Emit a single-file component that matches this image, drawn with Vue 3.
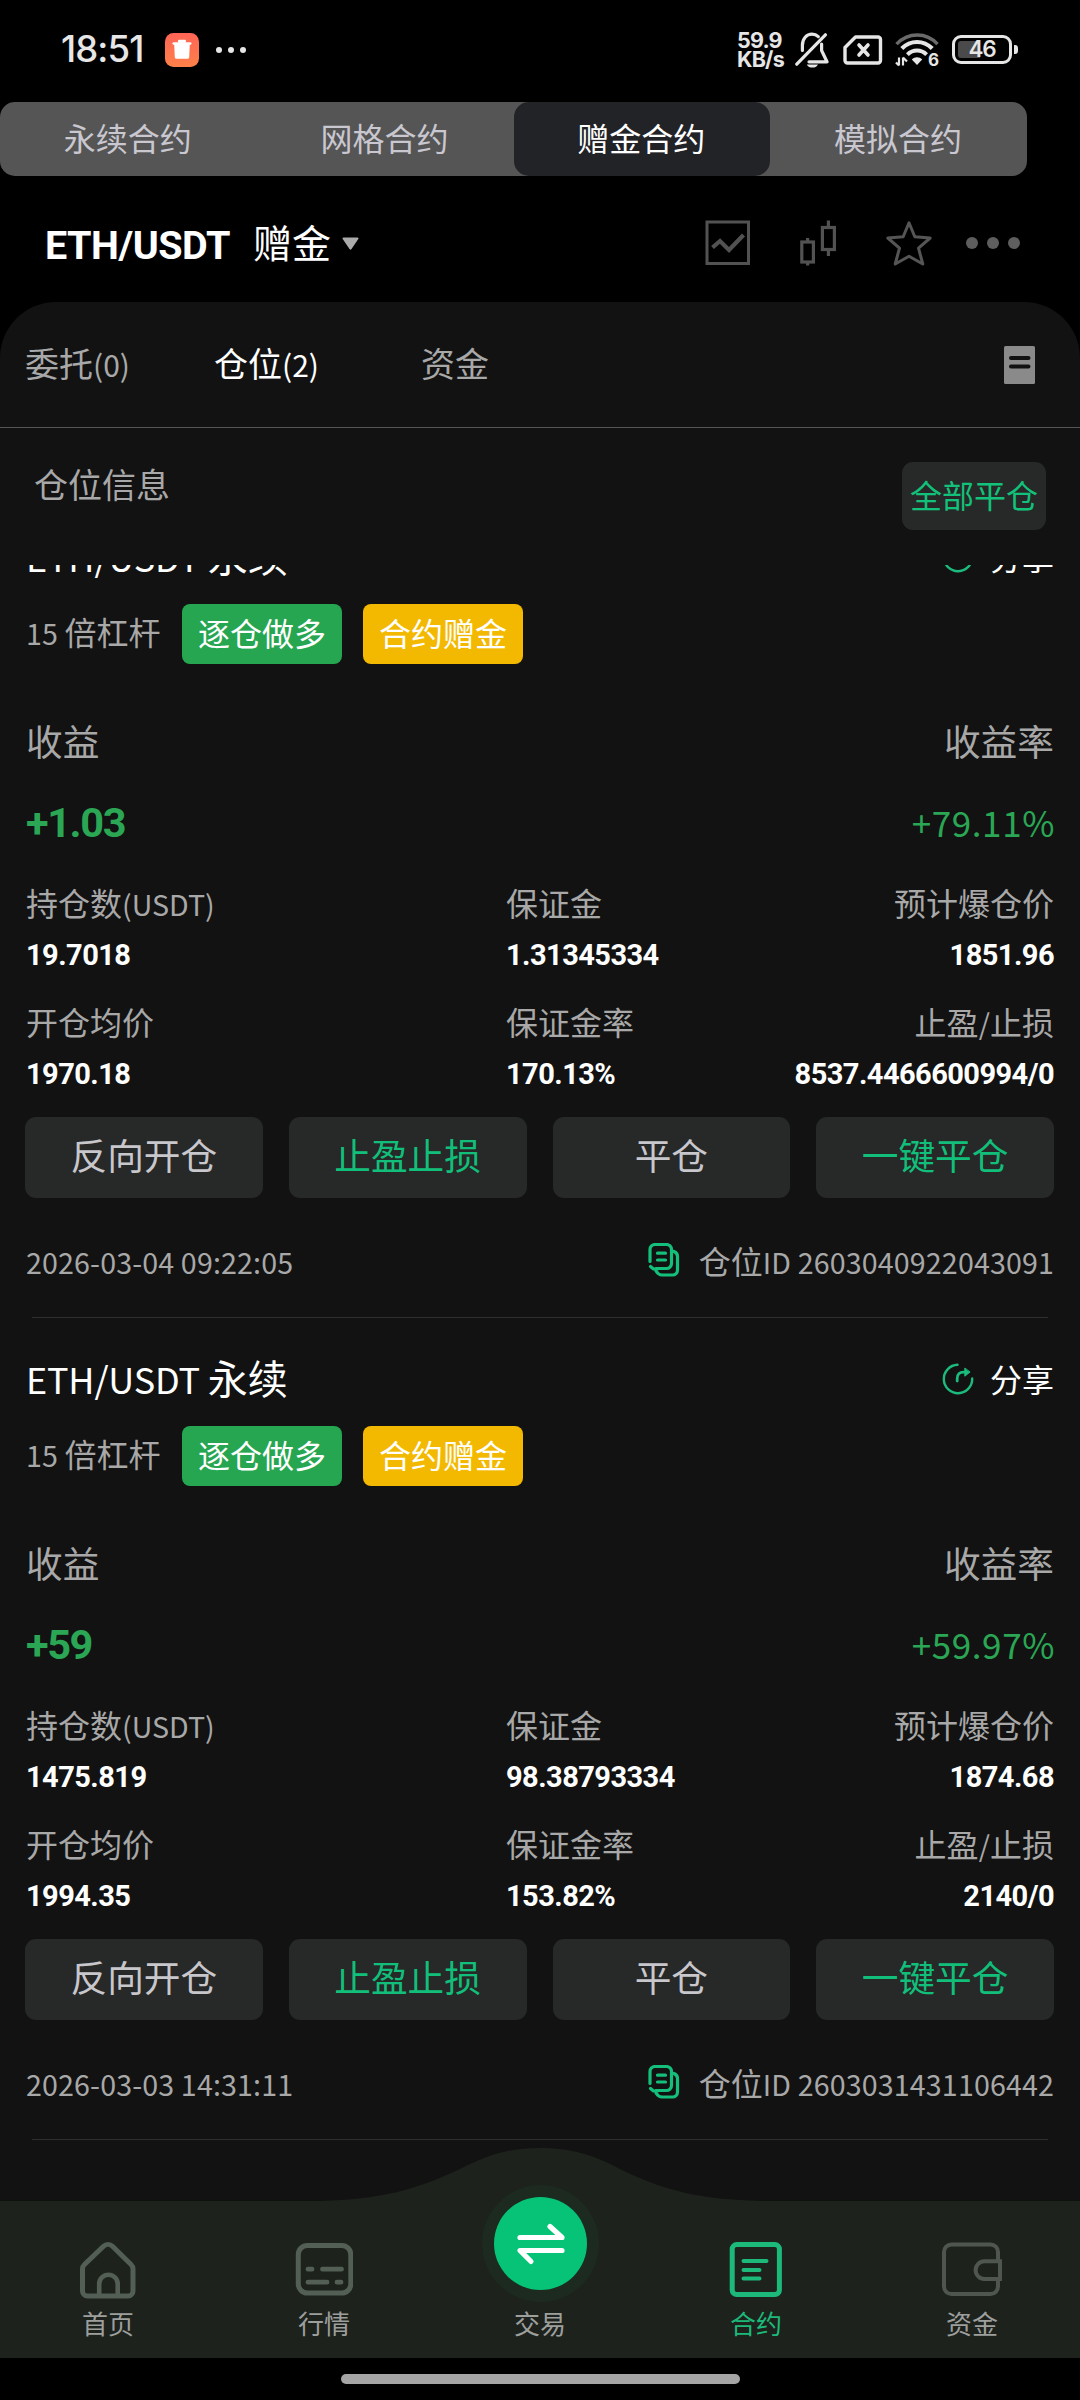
<script setup>
const modes = [
  { label: '永续合约' },
  { label: '网格合约' },
  { label: '赠金合约', active: true },
  { label: '模拟合约' },
]

const positions = [
  {
    profit: '+1.03',
    rate: '+79.11%',
    size: '19.7018',
    margin: '1.31345334',
    liquidation: '1851.96',
    entry: '1970.18',
    marginRate: '170.13%',
    stops: '8537.4466600994/0',
    time: '2026-03-04 09:22:05',
    id: '2603040922043091',
  },
  {
    profit: '+59',
    rate: '+59.97%',
    size: '1475.819',
    margin: '98.38793334',
    liquidation: '1874.68',
    entry: '1994.35',
    marginRate: '153.82%',
    stops: '2140/0',
    time: '2026-03-03 14:31:11',
    id: '2603031431106442',
  },
]

const actions = [
  { label: '反向开仓' },
  { label: '止盈止损', accent: true },
  { label: '平仓' },
  { label: '一键平仓', accent: true },
]
</script>

<template>
  <div class="screen">
    <header class="status">
      <span class="clock">18:51</span>
      <svg class="app-badge" width="34" height="34" viewBox="0 0 34 34">
        <defs>
          <linearGradient id="badge" x1="0" y1="0" x2="0" y2="1">
            <stop offset="0" stop-color="#ff6456" />
            <stop offset="1" stop-color="#ff8149" />
          </linearGradient>
        </defs>
        <rect width="34" height="34" rx="8.5" fill="url(#badge)" />
        <rect x="13" y="6.800" width="8" height="3" rx="1.200" fill="#fff" />
        <rect x="7.500" y="9.200" width="19" height="2.600" rx="1.200" fill="#fff" />
        <path d="M9.200 11h15.600l-.6 13.200a1.800 1.800 0 0 1-1.800 1.600H11.600a1.800 1.800 0 0 1-1.800-1.600z" fill="#fff" />
      </svg>
      <span class="mini-dots"><i></i><i></i><i></i></span>
      <div class="status-right">
        <span class="speed"><span>59.9</span><span>KB/s</span></span>
        <svg class="bell" width="34" height="36" viewBox="0 0 34 36" fill="none" stroke="#e6e6e6" stroke-width="3.200" stroke-linecap="round" stroke-linejoin="round">
          <path d="M7.400 18.500V13.200C7.400 6.600 11.600 2.200 17 2.200c2.600 0 4.600 .8 6.300 2.400" />
          <path d="M26.600 12v6.500l5.400 11.300H14" />
          <path d="M1.800 32.200L30.400 2.800" />
          <path d="M11.800 32.400h11.200c-1.200 2.400-3.200 3.200-5.600 3.200s-4.400-.8-5.600-3.200z" fill="#e6e6e6" stroke="none" />
        </svg>
        <svg class="sim" width="40" height="30" viewBox="0 0 40 30" fill="none" stroke="#e6e6e6" stroke-width="3.400" stroke-linejoin="round" stroke-linecap="round">
          <path d="M12.500 2H35a2.500 2.500 0 0 1 2.500 2.500v21A2.500 2.500 0 0 1 35 28H4.500A2.500 2.500 0 0 1 2 25.500V12.500z" />
          <path d="M16 10l9 10M25 10l-9 10" stroke-width="3.600" />
        </svg>
        <svg class="wifi" width="44" height="34" viewBox="0 0 44 34" fill="none" stroke="#e6e6e6" stroke-width="4.200">
          <path d="M1.500 11.200C13-1 31.500-1 42.500 11.200" stroke="#6a6a6a" stroke-width="3.400" />
          <path d="M6.800 15.600C15.500 6.800 28.500 6.800 37.200 15.600" />
          <path d="M12.400 21.600c5.500-5.400 13.700-5.400 19.200 0" stroke-width="4" />
          <path d="M16.800 26.600c2.900-3 7.500-3 10.400 0L22 32z" fill="#e6e6e6" stroke="none" />
          <path d="M4 24.500v8M8 24.500v8M1 29.500l3 3M8 24.500l4 4" stroke-width="2.200" />
          <text x="33" y="33" class="wifi-gen">6</text>
        </svg>
        <span class="battery"><span class="level"></span><b>46</b></span>
        <span class="battery-cap"></span>
      </div>
    </header>

    <nav class="modes">
      <span v-for="m in modes" :key="m.label" class="mode" :class="{ active: m.active }">{{ m.label }}</span>
    </nav>

    <div class="pair">
      <b class="symbol">ETH/USDT</b>
      <span class="kind">赠金</span>
      <svg class="caret" width="17" height="13" viewBox="0 0 17 13"><path d="M1.500 .5h14a1 1 0 0 1 .8 1.600L9.500 12a1.200 1.200 0 0 1-2 0L.7 2.100A1 1 0 0 1 1.500 .5z" fill="#aaa" /></svg>
      <div class="tools">
        <svg width="46" height="46" viewBox="0 0 46 46" fill="none" stroke="#525252">
          <rect x="2" y="2" width="41.500" height="41.500" stroke-width="3" />
          <path d="M7.500 27.500l7.500-6.500 9 9L38.500 15" stroke-width="4.200" />
        </svg>
        <svg class="candles" width="36" height="46" viewBox="0 0 36 46" fill="none" stroke="#525252" stroke-width="3.200">
          <rect x="1.800" y="22" width="11.600" height="20" />
          <path d="M7.600 18v4M7.600 42v3.500" />
          <rect x="22.400" y="7.500" width="12" height="22" />
          <path d="M28.400 .5v7M28.400 29.500V36" />
        </svg>
        <svg class="star" width="46" height="46" viewBox="0 0 46 46" fill="none" stroke="#555" stroke-width="3" stroke-linejoin="round">
          <path d="M23 2.800l5.800 14 15.400 1.200-11.700 10.200 4.300 15.800L23 36.200 9.200 44l4.300-15.800L1.800 18l15.400-1.200z" />
        </svg>
        <span class="more"><i></i><i></i><i></i></span>
      </div>
    </div>

    <main class="sheet">
      <div class="tabs">
        <span class="tab first">委托<i class="lat">(0)</i></span>
        <span class="tab second on">仓位<i class="lat">(2)</i></span>
        <span class="tab">资金</span>
        <svg class="doc" width="31" height="38" viewBox="0 0 31 38">
          <rect width="31" height="38" rx="1.500" fill="#8a8a8a" />
          <path d="M7 12h17.500M7 20.500h17.500" stroke="#121212" stroke-width="4" stroke-linecap="round" />
        </svg>
      </div>

      <div class="info">
        <span class="info-title">仓位信息</span>
        <button class="close-all">全部平仓</button>
      </div>

      <div class="list">
        <article v-for="p in positions" :key="p.id" class="card">
          <div class="head">
            <span class="name"><i class="lat">ETH/USDT </i>永续</span>
            <span class="share">
              <svg width="32" height="32" viewBox="0 0 32 32" fill="none" stroke="#1cba7c" stroke-width="2.400" stroke-linecap="round">
                <path d="M15.500 1.800A14.200 14.200 0 1 0 30.200 15.500" />
                <path d="M15.200 18v-2.500c0-4.200 2.300-6.300 6.300-6.300h2.500" stroke-width="2.800" />
                <path d="M22.800 5.400v7.800l5-4z" fill="#1cba7c" stroke-width="1" stroke-linejoin="round" />
              </svg>
              <span class="share-text">分享</span>
            </span>
          </div>

          <div class="tags">
            <span class="lever"><i class="lat">15 </i>倍杠杆</span>
            <span class="tag green">逐仓做多</span>
            <span class="tag gold">合约赠金</span>
          </div>

          <div class="pnl-label"><span>收益</span><span>收益率</span></div>
          <div class="pnl"><b>{{ p.profit }}</b><span>{{ p.rate }}</span></div>

          <div class="row label">
            <span>持仓数<i class="lat unit">(USDT)</i></span><span>保证金</span><span>预计爆仓价</span>
          </div>
          <div class="row value first">
            <span>{{ p.size }}</span><span>{{ p.margin }}</span><span>{{ p.liquidation }}</span>
          </div>
          <div class="row label">
            <span>开仓均价</span><span>保证金率</span><span>止盈<i class="lat">/</i>止损</span>
          </div>
          <div class="row value">
            <span>{{ p.entry }}</span><span>{{ p.marginRate }}</span><span>{{ p.stops }}</span>
          </div>

          <div class="actions">
            <button v-for="a in actions" :key="a.label" :class="{ accent: a.accent }">{{ a.label }}</button>
          </div>

          <div class="foot">
            <span><i class="lat">{{ p.time }}</i></span>
            <span class="pid">
              <svg width="32" height="34" viewBox="0 0 32 34" fill="none" stroke="#14bf7b" stroke-width="3.200" stroke-linecap="round" stroke-linejoin="round">
                <path d="M2 18.500V6.500a5 5 0 0 1 5-5h11.500a5 5 0 0 1 5 5v14a5 5 0 0 1-5 5H8" />
                <path d="M2.500 23.500l3 2.500h4" />
                <path d="M26 8.500c2 .8 3.500 2.500 3.500 5V27a5 5 0 0 1-5 5H14c-3 0-4.500-1.500-6-4" />
                <path d="M9.500 10.200h8M9.500 17h8" />
              </svg>
              <span>仓位<i class="lat">ID {{ p.id }}</i></span>
            </span>
          </div>
          <hr />
        </article>
      </div>
    </main>

    <nav class="dock">
      <svg class="dock-bg" width="1080" height="210" viewBox="0 0 1080 210">
        <path d="M0 52.500H320C380 52.500 420 40 460 21C490 6 510 0 540 0S592 6 620 21C660 41 700 52.500 762 52.500H1080V210H0z" fill="#1d221d" />
      </svg>
      <div class="item">
        <svg width="58" height="58" viewBox="0 0 58 58" fill="none" stroke="#535e54" stroke-width="5">
          <path d="M24.500 5.200a6.500 6.500 0 0 1 9 0L52 23.500a6 6 0 0 1 2 4.500v22a5 5 0 0 1-5 5H8.500a5 5 0 0 1-5-5V28a6 6 0 0 1 2-4.500z" />
          <path d="M20.200 55V43a8.800 8.800 0 0 1 18.500 0v12" stroke-width="4.600" />
        </svg>
        <span>首页</span>
      </div>
      <div class="item">
        <svg width="58" height="58" viewBox="0 0 58 58" fill="none" stroke="#535e54" stroke-width="5" stroke-linecap="round">
          <rect x="3.300" y="4.500" width="52.500" height="47.500" rx="9" />
          <path d="M13 28.200h4M27.500 28.200h19M13 41.200h19M42 41.200h4" stroke-width="4.800" />
        </svg>
        <span>行情</span>
      </div>
      <div class="item">
        <span class="trade">
          <svg width="48" height="44" viewBox="0 0 48 44" fill="none" stroke="#fff" stroke-width="5.200" stroke-linecap="round" stroke-linejoin="round">
            <path d="M3 15.500H45L33 4.500" />
            <path d="M45 28.500H3L14 39.500" />
          </svg>
        </span>
        <span>交易</span>
      </div>
      <div class="item on">
        <svg width="58" height="58" viewBox="0 0 58 58" fill="none" stroke="#1cb97a" stroke-width="5">
          <rect x="5.200" y="3.600" width="47.200" height="50" rx="4.500" />
          <path d="M16.500 20h23M16.500 29h16M16.500 37.500h16" stroke-width="4" stroke-linecap="round" />
        </svg>
        <span>合约</span>
      </div>
      <div class="item">
        <svg width="62" height="58" viewBox="0 0 62 58" fill="none" stroke="#4f5650" stroke-width="4">
          <path d="M57 20V11a7.500 7.500 0 0 0-7.500-7.500H10.500A7.500 7.500 0 0 0 3 11v34.500a7.500 7.500 0 0 0 7.500 7.500h39a7.500 7.500 0 0 0 7.500-7.500V38" />
          <path d="M59 20.200H43.500a8.900 8.900 0 0 0 0 17.800H59z" />
        </svg>
        <span>资金</span>
      </div>
    </nav>

    <footer class="gesture"><span></span></footer>
  </div>
</template>

<style>
body {
  background: #000;
}
</style>

<style scoped>
.screen {
  display: flex;
  flex-direction: column;
  width: 1080px;
  height: 2400px;
  overflow: hidden;
  background: #000;
  color: #a8a8a8;
  font-family: "Noto Sans CJK SC", sans-serif;
  font-size: 32px;
  line-height: 1;
  white-space: nowrap;
}
i { font-style: normal; }
svg { display: block; flex: none; }
button {
  border: 0;
  padding: 0;
  font: inherit;
  color: inherit;
}
.lat {
  font-size: 28.600px;
  letter-spacing: 0.150px;
  white-space: pre;
}
.unit { letter-spacing: 0; }

/* status bar */
.status {
  flex: none;
  display: flex;
  align-items: center;
  height: 102px;
  padding: 0 62px 3px 61px;
  box-sizing: border-box;
  color: #e6e6e6;
}
.clock {
  width: 104px;
  font: 500 36.500px/1 Inter, sans-serif;
  letter-spacing: -0.900px;
}
.mini-dots {
  display: flex;
  gap: 6px;
  margin-left: 17px;
}
.mini-dots i {
  width: 6px;
  height: 6px;
  border-radius: 50%;
  background: #e6e6e6;
}
.status-right {
  display: flex;
  align-items: center;
  margin-left: auto;
}
.speed {
  display: flex;
  flex-direction: column;
  width: 58px;
  font: 700 21.500px/18.500px Inter, sans-serif;
  letter-spacing: -0.800px;
}
.sim { margin-left: 14px; }
.wifi { margin-left: 12px; overflow: visible; }
.wifi-gen {
  font: 700 17px Inter, sans-serif;
  fill: #e6e6e6;
  stroke: #000;
  stroke-width: 3px;
  paint-order: stroke;
}
.battery {
  position: relative;
  display: flex;
  align-items: center;
  justify-content: center;
  width: 60px;
  height: 29px;
  margin-left: 13px;
  box-sizing: border-box;
  border: 3px solid #e6e6e6;
  border-radius: 9px;
}
.battery .level {
  position: absolute;
  left: 3px;
  top: 3px;
  width: 22px;
  height: 17px;
  border-radius: 3px 0 0 3px;
  background: #4a4a4a;
}
.battery b {
  position: relative;
  font: 600 22.500px/1 Inter, sans-serif;
  letter-spacing: -1.200px;
}
.battery-cap {
  width: 4px;
  height: 9px;
  margin-left: 2px;
  border-radius: 0 3px 3px 0;
  background: #e6e6e6;
}

/* contract modes */
.modes {
  flex: none;
  display: flex;
  width: 1027px;
  height: 74px;
  border-radius: 15px;
  background: #555;
}
.mode {
  flex: 1;
  display: flex;
  align-items: center;
  justify-content: center;
  padding: 0 1px 4px 0;
  box-sizing: border-box;
  border-radius: 15px;
  color: #c9c7cf;
}
.mode.active {
  background: #222327;
  color: #fff;
}

/* pair header */
.pair {
  flex: none;
  display: flex;
  align-items: center;
  height: 126px;
  padding: 8px 60px 0 45px;
  box-sizing: border-box;
  color: #fff;
}
.symbol {
  width: 208px;
  padding-top: 5px;
  font: 700 39.500px/1 Roboto, sans-serif;
  letter-spacing: -0.500px;
}
.kind {
  width: 89px;
  padding-bottom: 4px;
  font-size: 39px;
}
.tools {
  display: flex;
  align-items: center;
  margin-left: auto;
}
.candles { margin-left: 49px; }
.star { margin-left: 50px; }
.more {
  display: flex;
  gap: 8.500px;
  margin-left: 34px;
}
.more i {
  width: 12.500px;
  height: 12.500px;
  border-radius: 50%;
  background: #5e5e5e;
}

/* sheet */
.sheet {
  flex: 1;
  min-height: 0;
  display: flex;
  flex-direction: column;
  border-radius: 56px 56px 0 0;
  background: #121212;
}
.tabs {
  flex: none;
  display: flex;
  align-items: center;
  height: 126px;
  padding: 0 45px 0 25px;
  box-sizing: border-box;
  border-bottom: 1px solid #555;
  font-size: 34px;
}
.tab { padding-bottom: 4px; }
.tab .lat { font-size: 30px; letter-spacing: 0; }
.tab.first { width: 189px; }
.tab.second { width: 207px; }
.tab.on { color: #fff; }
.doc { margin-left: auto; }
.info {
  flex: none;
  display: flex;
  align-items: flex-start;
  justify-content: space-between;
  height: 137px;
  padding: 34px 34px 0 34px;
  box-sizing: border-box;
}
.info-title {
  padding-top: 5px;
  font-size: 34px;
}
.close-all {
  width: 144px;
  height: 68px;
  padding-bottom: 5px;
  border-radius: 11px;
  background: #272828;
  color: #12c27a;
}

/* positions */
.list {
  flex: 1;
  min-height: 0;
  overflow: hidden;
}
.card {
  display: flex;
  flex-direction: column;
  height: 822px;
  padding: 30px 26px 0;
  box-sizing: border-box;
}
.card:first-child { margin-top: -69px; }
.head {
  display: flex;
  align-items: center;
  justify-content: space-between;
  height: 58px;
  color: #fff;
}
.name { font-size: 40px; }
.name .lat { font-size: 36px; letter-spacing: -0.200px; }
.share {
  display: flex;
  align-items: center;
  gap: 16px;
  padding-top: 3px;
}
.share svg { margin-bottom: -1px; }
.share-text { padding-bottom: 2px; }
.tags {
  display: flex;
  height: 60px;
  margin-top: 20px;
}
.lever {
  width: 156px;
  padding-top: 11px;
}
.tag {
  display: flex;
  align-items: center;
  justify-content: center;
  width: 160px;
  padding-bottom: 5px;
  margin-right: 21px;
  box-sizing: border-box;
  border-radius: 8px;
  color: #fff;
}
.green { background: #26a651; }
.gold { background: #f3b900; }
.pnl-label,
.pnl {
  display: flex;
  align-items: center;
  justify-content: space-between;
}
.pnl-label {
  height: 54px;
  margin-top: 49px;
  font-size: 36.700px;
}
.pnl {
  height: 56px;
  margin-top: 27px;
  color: #2aa654;
}
.pnl b {
  padding-top: 2px;
  font: 700 41.500px/1 Roboto, sans-serif;
  letter-spacing: -1.400px;
}
.pnl span {
  padding-bottom: 2px;
  margin-right: -1px;
  font-size: 35px;
  letter-spacing: 0.600px;
}
.row {
  display: grid;
  grid-template-columns: 480px 240px 1fr;
  align-items: center;
}
.row span:last-child { text-align: right; }
.label {
  height: 46px;
  margin-top: 29px;
}
.value {
  height: 40px;
  margin-top: 10px;
  color: #fff;
  font: 700 29px/1 Roboto, sans-serif;
  letter-spacing: -0.550px;
}
.value + .label { margin-top: 23px; }
.actions {
  display: flex;
  gap: 26px;
  height: 81px;
  margin: 23px 0 0 -1px;
}
.actions button {
  flex: 1;
  padding-bottom: 6px;
  border-radius: 11px;
  background: #272828;
  color: #c8c7cc;
  font-size: 36.700px;
}
.actions .accent { color: #12bf7a; }
.foot {
  display: flex;
  align-items: center;
  justify-content: space-between;
  height: 49px;
  margin-top: 38px;
}
.pid {
  display: flex;
  align-items: center;
  gap: 19px;
}
.pid svg { margin-bottom: 1px; }
hr {
  width: 1016px;
  height: 1px;
  margin: 32px 0 0 6px;
  border: 0;
  background: #2d2d2d;
}

/* bottom navigation */
.dock {
  position: relative;
  flex: none;
  display: flex;
  height: 210px;
  margin-top: -52px;
}
.dock-bg {
  position: absolute;
  inset: 0;
}
.item {
  position: relative;
  flex: 1;
  display: flex;
  flex-direction: column;
  align-items: center;
  justify-content: flex-end;
  gap: 11px;
  padding-bottom: 22px;
  color: #9d9f9d;
  font-size: 26px;
}
.item.on { color: #1cb97a; }
.trade {
  display: flex;
  align-items: center;
  justify-content: center;
  width: 93px;
  height: 93px;
  margin: 0 0 9px 1px;
  border-radius: 50%;
  background: #06c377;
  box-shadow: 0 0 0 12px #1c2a1f;
}
.gesture {
  flex: none;
  display: flex;
  justify-content: center;
  height: 42px;
  padding-top: 16px;
  box-sizing: border-box;
}
.gesture span {
  width: 399px;
  height: 10px;
  border-radius: 5px;
  background: #a5a5a5;
}
</style>
